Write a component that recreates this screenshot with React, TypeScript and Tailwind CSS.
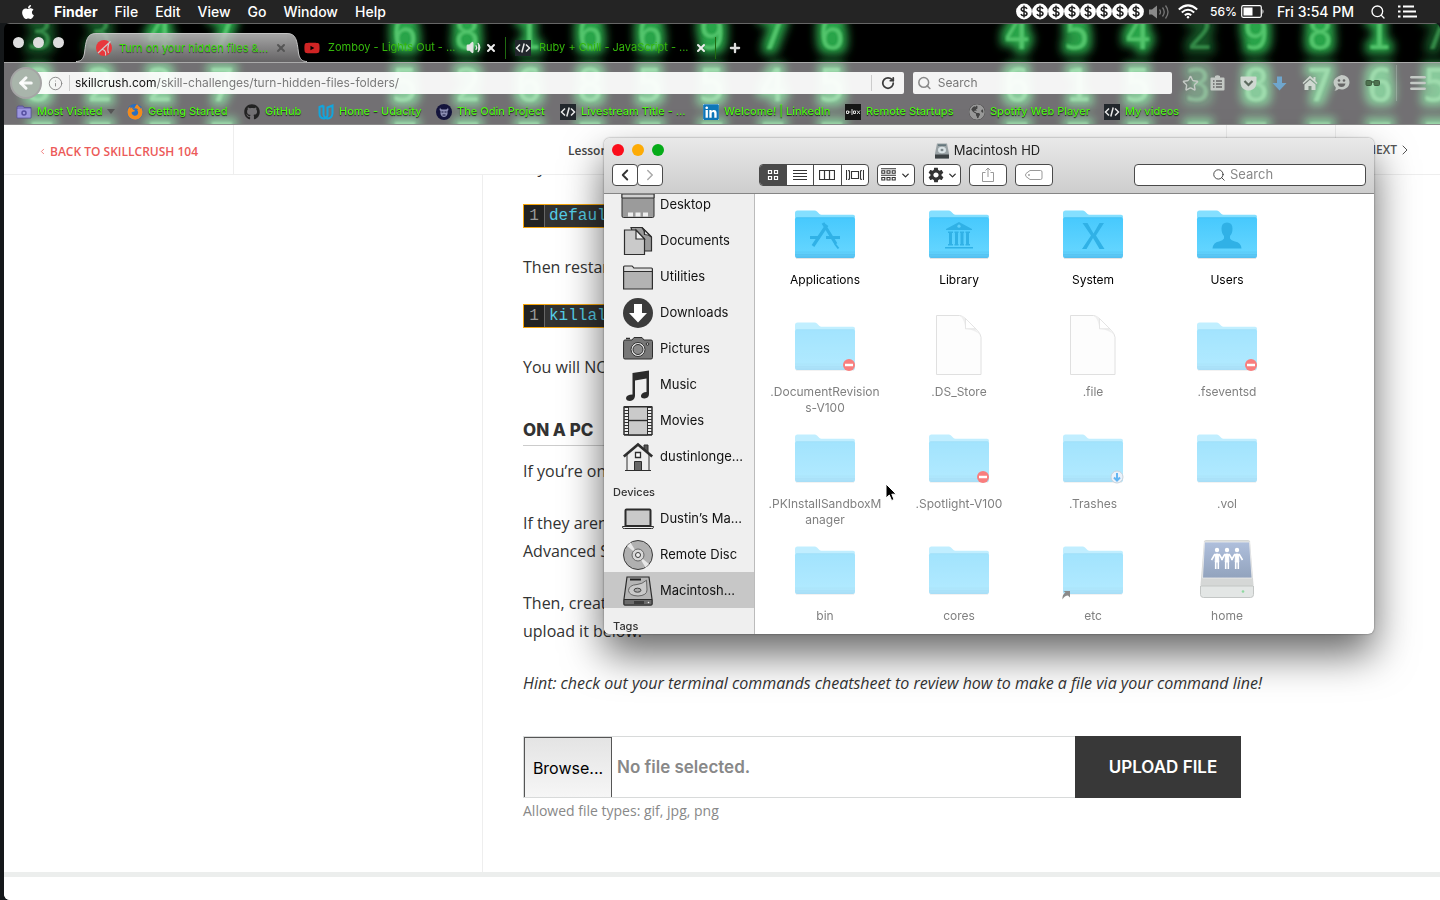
import React from "react";
import {
  FaApple,
  FaGithub,
  FaFirefoxBrowser,
  FaYoutube,
  FaLinkedin,
  FaGlobeAmericas,
} from "react-icons/fa";
import { IoMdSettings } from "react-icons/io";
import {
  Search,
  Star,
  Menu,
  ChevronLeft,
  ChevronRight,
  ChevronDown,
  X,
  Plus,
  ArrowLeft,
  RotateCw,
  Info,
  Volume2,
} from "lucide-react";

/* ---------- Menu bar ---------- */

const menus = ["File", "Edit", "View", "Go", "Window", "Help"];

function MenuBar() {
  return (
    <header className="flex h-[23px] items-center justify-between bg-[#242424] pr-[22px] pl-5 text-[14px] font-medium text-white">
      <nav className="flex items-center gap-[17px]" aria-label="Menu bar">
        <button type="button" aria-label="Apple menu" className="pr-px">
          <FaApple size={16} />
        </button>
        <button type="button" className="font-bold">
          Finder
        </button>
        {menus.map((m) => (
          <button type="button" key={m}>
            {m}
          </button>
        ))}
      </nav>
      <div className="flex items-center">
        <svg width="128" height="17" viewBox="0 0 128 17" className="mr-1">
          {[0, 1, 2, 3, 4, 5, 6, 7].map((i) => (
            <g key={i} transform={`translate(${i * 16} 0)`}>
              <circle cx="8" cy="8.5" r="7.9" fill="#fff" />
              <path
                d="M11 5.8C10.4 4.6 9.2 4.2 8 4.2 6.400 4.200 5.200 5 5.200 6.300 5.200 9.300 11 7.600 11 10.600 11 12 9.700 12.800 8 12.800 6.500 12.800 5.400 12.200 5 11M8 2.600V14.400"
                fill="none"
                stroke="#222"
                strokeWidth="1.500"
              />
            </g>
          ))}
        </svg>
        <svg width="22" height="16" viewBox="0 0 22 16" fill="none" stroke="#777" className="mr-2">
          <path d="M1 5.500h3l5-4v13l-5-4H1z" fill="#8a8a8a" stroke="none" />
          <path d="M11.500 5.500q2 2.500 0 5M14.500 3.500q3.500 4.500 0 9M17.500 1.500q5 6.500 0 13" strokeWidth="1.300" />
        </svg>
        <svg width="20" height="15" viewBox="0 0 20 15" fill="none" stroke="#fff" strokeWidth="2" className="mr-3">
          <path d="M.8 5.400q9.200-8 18.400 0M3.800 8.400q6.200-5.200 12.400 0M6.800 11.200q3.200-2.600 6.400 0" />
          <circle cx="10" cy="13.200" r="1.200" fill="#fff" stroke="none" />
        </svg>
        <span className="mr-1 text-[12px]">56%</span>
        <svg width="24" height="13" viewBox="0 0 24 13" className="mr-3">
          <rect x=".7" y=".7" width="19.600" height="11.600" rx="1.500" fill="none" stroke="#fff" strokeWidth="1.200" />
          <rect x="2.500" y="2.500" width="9" height="8" fill="#fff" />
          <path d="M21.500 4q2 2.500 0 5z" fill="#fff" />
        </svg>
        <span className="mr-4">Fri 3:54 PM</span>
        <button type="button" aria-label="Spotlight" className="mr-3">
          <Search size={16} />
        </button>
        <button type="button" aria-label="Notification Center">
          <svg width="20" height="13" viewBox="0 0 20 13" stroke="#fff" strokeWidth="2">
            <path d="M0 1.500h2.500M5 1.500h11M0 6.500h2.500M5 6.500h13M0 11.500h2.500M5 11.500h14" />
          </svg>
        </button>
      </div>
    </header>
  );
}

/* ---------- Browser theme artwork ---------- */

const digitRows: { y: number; dim: number[]; digits: [number, string][] }[] = [
  {
    y: 26,
    dim: [95, 1200, 1196, 1432, 36],
    digits: [
      [36, "3"], [95, "3"], [156, "4"], [219, "7"], [401, "6"], [463, "8"], [524, "1"], [586, "6"],
      [646, "6"], [708, "9"], [769, "7"], [828, "6"], [1013, "4"], [1073, "5"], [1134, "4"],
      [1196, "2"], [1252, "9"], [1316, "8"], [1374, "1"], [1432, "7"],
    ],
  },
  {
    y: 78,
    dim: [1194],
    digits: [
      [34, "8"], [96, "2"], [156, "2"], [218, "7"], [401, "5"], [464, "2"], [525, "6"], [586, "8"],
      [646, "5"], [708, "5"], [769, "4"], [828, "5"], [1013, "6"], [1074, "1"], [1134, "5"],
      [1194, "3"], [1252, "8"], [1316, "7"], [1376, "6"], [1432, "5"],
    ],
  },
];

const litEdges = [38, 96, 156, 218, 401, 464, 525, 586, 646, 708, 769, 828, 1013, 1074, 1134, 1194, 1252, 1316, 1376, 1432];

function MatrixArtwork() {
  return (
    <svg
      aria-hidden="true"
      className="absolute inset-0 h-full w-full"
      fontFamily="DejaVu Sans Mono, monospace"
      fontSize="44"
      textAnchor="middle"
    >
      <defs>
        <filter id="glow" x="-5%" y="-30%" width="110%" height="160%">
          <feMorphology in="SourceGraphic" operator="dilate" radius="5" result="fat" />
          <feGaussianBlur in="fat" stdDeviation="5" result="halo" />
          <feColorMatrix in="halo" type="matrix" values=".3 0 0 0 0  0 .75 0 0 0  0 0 .5 0 0  0 0 0 .95 0" result="tint" />
          <feGaussianBlur in="SourceGraphic" stdDeviation="1.200" result="core" />
          <feMerge>
            <feMergeNode in="tint" />
            <feMergeNode in="core" />
          </feMerge>
        </filter>
      </defs>
      <g filter="url(#glow)" fill="#52c56c">
        {digitRows.map((row) =>
          row.digits.map(([x, d]) => (
            <text key={`${row.y}-${x}`} x={x} y={row.y} opacity={row.dim.includes(x) ? 0.5 : 1}>
              {d}
            </text>
          ))
        )}
        {litEdges.map((x) => (
          <path key={x} d={`M${x - 10} 101h20`} stroke="#52c56c" strokeWidth="3" />
        ))}
      </g>
    </svg>
  );
}

/* ---------- Browser ---------- */

function CodeIcon() {
  return (
    <svg width="16" height="16" viewBox="0 0 16 16" className="shrink-0">
      <rect width="16" height="16" fill="#22272c" />
      <path d="M5 4.500 1.500 8 5 11.500M11 4.500 14.500 8 11 11.500M9.200 3.500 6.800 12.500" fill="none" stroke="#e8e8e8" strokeWidth="1.500" />
    </svg>
  );
}

function SkillcrushIcon() {
  return (
    <svg width="16" height="16" viewBox="0 0 16 16" className="shrink-0">
      <circle cx="8" cy="8" r="8" fill="#e8383c" />
      <path d="M2 13 14.500 1.500M6.500 9.500q4 1 3 6M13 3q-2 6-.5 10" stroke="#cfcfcf" strokeWidth="1.100" fill="none" />
    </svg>
  );
}

function TabEdge({ right = false }: { right?: boolean }) {
  return (
    <svg width="20" height="29" viewBox="0 0 20 29" className={right ? "shrink-0 -scale-x-100" : "shrink-0"} aria-hidden="true">
      <defs>
        <linearGradient id="tabfill" gradientUnits="userSpaceOnUse" x1="0" y1="0" x2="0" y2="29">
          <stop offset="0" stopColor="#c3c3c3" stopOpacity=".85" />
          <stop offset="1" stopColor="#777577" stopOpacity=".85" />
        </linearGradient>
      </defs>
      <path d="M0 28.500C5 28.500 7.500 26 8.500 20 10 7 11 .5 20 .5V29H0z" fill="url(#tabfill)" />
      <path d="M0 28.500C5 28.500 7.500 26 8.500 20 10 7 11 .5 20 .5" fill="none" stroke="#c4c4c4" />
    </svg>
  );
}

function Tabs() {
  return (
    <div className="relative flex h-[39px] items-end border-t border-[#666]">
      <div className="mb-[14px] ml-[9px] flex gap-[9px]" aria-label="Window controls">
        {["Close", "Minimize", "Zoom"].map((n) => (
          <button type="button" key={n} aria-label={n} className="size-[11px] rounded-full bg-[#dedede]" />
        ))}
      </div>
      <div className="ml-3 flex h-[29px] w-[226px] items-end">
        <TabEdge />
        <div className="relative z-10 flex h-[29px] flex-1 items-center border-t border-[#c4c4c4] bg-linear-to-b from-[#c3c3c3]/85 to-[#777577]/85">
          <SkillcrushIcon />
          <a href="#tab-1" className="ml-[7px] w-[154px] shrink-0 text-[11px] whitespace-nowrap text-[#3fe011] [text-shadow:0_1px_1px_#333]">
            Turn on your hidden files &amp;...
          </a>
          <button type="button" aria-label="Close tab" className="ml-0.5 shrink-0 text-[#555]">
            <X size={12} strokeWidth={4} />
          </button>
        </div>
        <TabEdge right />
      </div>
      <div className="flex h-[29px] items-center">
        <FaYoutube size={16} className="ml-0.5 text-[#cf2424]" />
        <a href="#tab-2" className="ml-2 w-[134px] text-[11px] whitespace-nowrap text-[#35b80c]">
          Zomboy - Lights Out - ...
        </a>
        <Volume2 size={15} fill="#e5e5e5" strokeWidth={2} className="ml-1 text-[#e5e5e5]" />
        <button type="button" aria-label="Close tab" className="ml-1 text-[#eee]">
          <X size={12} strokeWidth={4} />
        </button>
        <span className="mr-[9px] ml-2 h-[22px] w-px bg-[#1f6a10]" />
        <CodeIcon />
        <a href="#tab-3" className="ml-2 w-[154px] text-[11px] whitespace-nowrap text-[#35b80c]">
          Ruby + Chill - JavaScript - ...
        </a>
        <button type="button" aria-label="Close tab" className="ml-0.5 text-[#eee]">
          <X size={12} strokeWidth={4} />
        </button>
        <span className="mr-3 ml-2 h-[22px] w-px bg-[#1f6a10]" />
        <button type="button" aria-label="New tab" className="text-[#ddd]">
          <Plus size={14} strokeWidth={4} />
        </button>
      </div>
    </div>
  );
}

function NavBar() {
  return (
    <div className="flex h-10 items-center">
      <button
        type="button"
        aria-label="Back"
        className="relative z-10 ml-1.5 flex size-8 items-center justify-center rounded-full border-2 border-[#a5a5a5] bg-[#a9b5ab] text-white/90"
      >
        <ArrowLeft size={18} strokeWidth={4} />
      </button>
      <div className="-ml-2 flex h-[22px] flex-1 items-center rounded-r-xs bg-white/92 pl-[14px]">
        <Info size={15} strokeWidth={1.5} className="text-[#888]" />
        <span className="mr-[5px] ml-1.5 h-4 w-px bg-[#ccc]" />
        <p className="flex-1 text-[12px] text-[#7a7a7a]">
          <span className="text-[#111]">skillcrush.com</span>/skill-challenges/turn-hidden-files-folders/
        </p>
        <span className="h-4 w-px bg-[#ccc]" />
        <button type="button" aria-label="Reload" className="mx-[9px] text-[#3c3c3c]">
          <RotateCw size={14} strokeWidth={3} />
        </button>
      </div>
      <label className="ml-[9px] flex h-[22px] w-[259px] items-center rounded-xs bg-white/92 pl-1 text-[#8a8a8a]">
        <Search size={16} strokeWidth={2.5} />
        <input
          type="text"
          aria-label="Search the web"
          placeholder="Search"
          className="ml-1.5 w-full bg-transparent text-[12px] outline-none placeholder:text-[#777]"
        />
      </label>
      <div className="flex items-center gap-[15px] pr-3 pl-2.5 text-[#c4c9c5]">
        <Star size={17} className="-mr-1" />
        <svg width="15" height="16" viewBox="0 0 15 16">
          <path d="M1.500 2.500h3.500V1q2.500-1.500 5 0v1.500h3.500q1 0 1 1v11q0 1-1 1h-12q-1 0-1-1v-11q0-1 1-1z" fill="#c4c9c5" />
          <path d="M3 6h1.500M6 6h6M3 9h1.500M6 9h6M3 12h1.500M6 12h6" stroke="#666" strokeWidth="1.400" />
        </svg>
        <svg width="17" height="15" viewBox="0 0 17 15">
          <path d="M1.500.5h14q1 0 1 1V6q0 5-3.500 7.300-4.500 2.400-9 0Q.5 11 .5 6V1.500q0-1 1-1z" fill="#d0d8d1" />
          <path d="m4.500 5 4 4 4-4" fill="none" stroke="#5d6b5e" strokeWidth="2.200" />
        </svg>
        <svg width="15" height="15" viewBox="0 0 15 15">
          <path d="M5 .5h5V7h4.500l-7 7.500L.5 7H5z" fill="#6fa6cd" />
        </svg>
        <svg width="16" height="16" viewBox="0 0 16 16" fill="#d0d8d1">
          <path d="M8 .8 11.500 4V2h2v4L15.500 8l-1 1L8 3.200 1.500 9l-1-1z" />
          <path d="M8 4.800 13.500 9.500V15h-4v-4h-3v4h-4V9.500z" />
        </svg>
        <svg width="17" height="16" viewBox="0 0 17 16">
          <path d="M8.500 0C13 0 16.500 3 16.500 7.200S13 14.500 8.500 14.500q-1.500 0-2.800-.4Q4 15.800 1.500 15.800 3 14.500 2.800 12.500.5 10.500.5 7.200.5 3 8.500 0z" fill="#c4c9c5" />
          <circle cx="6" cy="5.500" r="1.300" fill="#666" />
          <circle cx="11" cy="5.500" r="1.300" fill="#666" />
          <path d="M4.500 8.500h8q-.8 3.500-4 3.500t-4-3.500z" fill="#666" />
        </svg>
        <svg width="16" height="8" viewBox="0 0 16 8">
          <rect x="1" y="1.500" width="5.500" height="5" rx="1" fill="#4e7350" stroke="#3f5c41" />
          <rect x="9" y="1.500" width="5.500" height="5" rx="1" fill="#4e7350" stroke="#3f5c41" />
          <path d="M6 3h3" stroke="#3f5c41" strokeWidth="1.500" />
        </svg>
        <span className="-mr-1 h-9 w-px bg-white/20" />
        <button type="button" aria-label="Open menu">
          <Menu size={20} strokeWidth={3} />
        </button>
      </div>
    </div>
  );
}

const bookmarks: { label: string; icon: React.ReactNode; width: string; arrow?: boolean }[] = [
  {
    label: "Most Visited",
    width: "w-[111px]",
    arrow: true,
    icon: (
      <svg width="16" height="16" viewBox="0 0 16 16" className="shrink-0">
        <path d="M1 3.500 2 2h5l1 1.500h7V14H1z" fill="#8079c4" stroke="#5a5496" />
        <path d="M1.500 5h13v8.500h-13z" fill="#9d97e0" />
        <circle cx="8" cy="9" r="2" fill="none" stroke="#564fa0" strokeWidth="1.500" />
      </svg>
    ),
  },
  {
    label: "Getting Started",
    width: "w-[117px]",
    icon: <FaFirefoxBrowser size={16} className="shrink-0 rounded-full bg-[#2a6fc0] text-[#f28a1c]" />,
  },
  { label: "GitHub", width: "w-[74px]", icon: <FaGithub size={16} className="shrink-0 text-[#222]" /> },
  {
    label: "Home - Udacity",
    width: "w-[118px]",
    icon: (
      <svg width="16" height="16" viewBox="0 0 16 16" fill="none" stroke="#12a5dd" strokeWidth="2" className="shrink-0">
        <path d="M5.500 1.500 1.500 3v6.500Q1.500 14 5.500 14.500q3 0 4-3V3.500l5-2V9.500q-.500 5-5 5-3-.5-4-3.500V1.500" />
      </svg>
    ),
  },
  {
    label: "The Odin Project",
    width: "w-[124px]",
    icon: (
      <svg width="16" height="16" viewBox="0 0 16 16" className="shrink-0">
        <circle cx="8" cy="8" r="8" fill="#14143c" />
        <path d="M4 3.500q.5 2 2 2h4q1.500 0 2-2Q13 6 11.500 7v3q-1 3-3.500 3t-3.500-3V7Q3 6 4 3.500z" fill="#8d8fb5" />
        <path d="M5.500 8h2M8.500 8h2M6.500 11h3" stroke="#14143c" strokeWidth="1.200" />
      </svg>
    ),
  },
  { label: "Livestream Title - ...", width: "w-[143px]", icon: <CodeIcon /> },
  {
    label: "Welcome! | LinkedIn",
    width: "w-[142px]",
    icon: (
      <span className="flex size-4 shrink-0 items-center justify-center bg-white">
        <FaLinkedin size={18} className="shrink-0 text-[#0f76b8]" />
      </span>
    ),
  },
  {
    label: "Remote Startups",
    width: "w-[124px]",
    icon: (
      <svg width="16" height="16" viewBox="0 0 16 16" className="shrink-0">
        <rect width="16" height="16" fill="#161616" />
        <path d="M1.500 7h2v2.500h-2zM4 8h1.500M7 5v6M8.500 7h2v2.500h-2zM12 6.500l3 3.500M15 6.500 12 10" fill="none" stroke="#ddd" />
      </svg>
    ),
  },
  {
    label: "Spotify Web Player",
    width: "w-[135px]",
    icon: <FaGlobeAmericas size={16} className="shrink-0 rounded-full bg-[#444] text-[#999]" />,
  },
  { label: "My videos", width: "w-[90px]", icon: <CodeIcon /> },
];

function Bookmarks() {
  return (
    <nav className="flex h-[21px] items-center pb-1 pl-3" aria-label="Bookmarks">
      {bookmarks.map((b) => (
        <a
          key={b.label}
          href={`#${b.label.replace(/\W+/g, "-").toLowerCase()}`}
          className={`${b.width} flex shrink-0 items-center gap-[5px] text-[11px] font-medium whitespace-nowrap text-[#4cf516] [text-shadow:0_1px_1px_#222]`}
        >
          {b.icon}
          {b.label}
          {b.arrow && (
            <svg width="8" height="5" viewBox="0 0 8 5" className="shrink-0">
              <path d="M0 0h8L4 5z" fill="#555" />
            </svg>
          )}
        </a>
      ))}
    </nav>
  );
}

function BrowserChrome() {
  return (
    <div className="relative overflow-hidden rounded-t-md bg-black">
      <MatrixArtwork />
      <Tabs />
      <div className="relative border-y border-t-[#aaa] border-b-[#8a8a8a] bg-[#fdf8ff]/45">
        <NavBar />
        <Bookmarks />
      </div>
    </div>
  );
}

/* ---------- Lesson page ---------- */

function CodeLine({ children }: { children: React.ReactNode }) {
  return (
    <pre className="mt-[23px] mb-[25px] flex h-6 items-stretch border border-[#f5a50c] bg-[#333] font-['Liberation_Mono',monospace] text-[16px] leading-[22px]">
      <span className="w-[21px] border-r border-[#666] bg-[#222] text-center text-[#999]">1</span>
      <code className="pl-1 text-[#55cde6]">{children}</code>
    </pre>
  );
}

function LessonPage() {
  return (
    <div className="flex flex-1 flex-col overflow-hidden rounded-bl-md bg-white font-['Open_Sans',sans-serif] text-[#333]">
      <nav className="flex h-[50px] items-center border-b border-[#eee] text-[12px] font-semibold" aria-label="Lesson navigation">
        <a
          href="#skillcrush-104"
          className="flex h-full w-[230px] items-center gap-[3px] border-r border-[#eee] pt-1 pl-[34px] text-[#ec5a58]"
        >
          <ChevronLeft size={9} />
          BACK TO SKILLCRUSH 104
        </a>
        <div className="h-full flex-1 border-r border-[#eee] pl-[334px] leading-[52px] text-[#444]">Lesson</div>
        <div className="h-full w-[109px] border-r border-[#eee]" />
        <a href="#next" className="flex w-[104px] items-center justify-end pr-[27px] text-[#555]">
          NEXT
          <ChevronRight size={16} strokeWidth={1.5} />
        </a>
      </nav>
      <div className="ml-[478px] flex-1 border-l border-[#eee] pr-10 pl-10 text-[16px] leading-7">
        <div className="w-full max-w-[718px]">
          <div className="h-1.5 overflow-hidden">
            <p className="-mt-[22px]">My</p>
          </div>
          <CodeLine>defaults</CodeLine>
          <p>Then restart</p>
          <CodeLine>killall</CodeLine>
          <p>You will NOT</p>
          <h2 className="mt-[34px] mb-[11px] border-b border-[#ccc] font-[Inter,sans-serif] text-[17px] leading-[30px] font-extrabold">
            ON A PC
          </h2>
          <p className="mb-6">If you’re on</p>
          <p className="mb-6">
            If they aren’t
            <br />
            Advanced Settings
          </p>
          <p className="mb-6">
            Then, create
            <br />
            upload it below.
          </p>
          <p className="whitespace-nowrap italic">
            Hint: check out your terminal commands cheatsheet to review how to make a file via your command line!
          </p>
          <form className="mt-[39px]" onSubmit={(e) => e.preventDefault()}>
            <div className="flex h-[62px] font-[Inter,sans-serif]">
              <div className="flex flex-1 items-center border border-r-0 border-[#d8dada]">
                <button
                  type="button"
                  className="h-full w-[88px] border border-b-0 border-[#555] bg-linear-to-b from-[#e4e4e4] to-[#f6f6f6] text-[16px] text-black"
                >
                  Browse...
                </button>
                <output className="pl-[5px] text-[17px] font-semibold text-[#888]">No file selected.</output>
              </div>
              <button type="submit" className="w-[166px] bg-[#383838] pl-2.5 text-[17px] font-semibold text-white">
                UPLOAD FILE
              </button>
            </div>
            <p className="text-[14px] leading-[26px] text-[#888]">Allowed file types: gif, jpg, png</p>
          </form>
        </div>
      </div>
      <footer className="h-7 border-t-[5px] border-[#eceeed] bg-white" />
    </div>
  );
}

/* ---------- Finder ---------- */

const tool = "flex h-[22px] items-center justify-center rounded-[4px] border border-[#4a4a4a] bg-white text-[#333]";

function DriveIcon({ size }: { size: number }) {
  return (
    <svg width={size} height={size} viewBox="0 0 30 30" className="shrink-0">
      <path d="M4 1h22l3 22v5q0 1-1 1H2q-1 0-1-1v-5z" fill="#b5b5b5" stroke="#2b2b2b" strokeWidth="1.200" />
      <path d="M1 23.500h28v4.500q0 1-1 1H2q-1 0-1-1z" fill="#6b6b6b" stroke="#2b2b2b" />
      <path d="M7 3.500h11" stroke="#222" strokeWidth="2" />
      <path d="M14 8.500q5-.3 9.500-4.300l.5 9.800q0 5.500-9 6-9-.3-9.500-5.500.5-5.500 8.500-6z" fill="#c9c9c9" stroke="#666" />
      <ellipse cx="14.500" cy="14.200" rx="3.500" ry="2" fill="#aaa" stroke="#444" />
      <path d="M12 25v3M14 25v3M16 25v3M18 25v3M20 25v3" stroke="#111" />
      <circle cx="25.500" cy="26.500" r=".8" fill="#eee" />
    </svg>
  );
}

function FinderHeader() {
  return (
    <header className="h-14 border-b border-[#858585] bg-linear-to-b from-[#e9e9e9] to-[#cdcdcd] px-2">
      <div className="relative flex h-6 items-center justify-center pt-0.5">
        <div className="absolute top-1.5 left-0 flex gap-2">
          <button type="button" aria-label="Close" className="size-3 rounded-full bg-[#fb0d1b]" />
          <button type="button" aria-label="Minimize" className="size-3 rounded-full bg-[#fdab05]" />
          <button type="button" aria-label="Zoom" className="size-3 rounded-full bg-[#05ab18]" />
        </div>
        <h1 className="flex items-center gap-1 pr-1 text-[13px] text-[#222]">
          <svg width="16" height="16" viewBox="0 0 16 16">
            <path d="M3 .5h10l2 10V15q0 .5-.5.5h-13Q1 15.500 1 15v-4.500z" fill="#9aa3a6" />
            <path d="M1 11.500h14V15q0 .5-.5.5h-13Q1 15.500 1 15z" fill="#3c4244" />
            <ellipse cx="8" cy="7" rx="4" ry="3.200" fill="#d9e2e5" />
            <ellipse cx="8" cy="7" rx="1.500" ry="1.200" fill="#7c878b" />
            <path d="M4 2.200h8" stroke="#53696f" strokeWidth="1.200" />
          </svg>
          Macintosh HD
        </h1>
      </div>
      <div className="flex items-center pt-0.5">
        <div className="flex">
          <button type="button" aria-label="Back" className={`${tool} w-[26px]`}>
            <ChevronLeft size={18} strokeWidth={2.5} className="shrink-0" />
          </button>
          <button type="button" aria-label="Forward" className={`${tool} -ml-px w-[26px]`}>
            <ChevronRight size={18} className="shrink-0 text-[#aaa]" />
          </button>
        </div>
        <div className="ml-24 flex h-[22px] w-[110px] overflow-hidden rounded-[4px] border border-[#4a4a4a] bg-white">
          <button type="button" aria-label="Icon view" className="flex flex-1 items-center justify-center bg-[#4a4a4a]">
            <svg width="12" height="12" viewBox="0 0 12 12" fill="none" stroke="#fff" strokeWidth="1.200">
              <path d="M1.500 1.500h3v3h-3zM7.500 1.500h3v3h-3zM1.500 7.500h3v3h-3zM7.500 7.500h3v3h-3z" />
            </svg>
          </button>
          <button type="button" aria-label="List view" className="flex flex-1 items-center justify-center border-r border-[#4a4a4a]">
            <svg width="14" height="12" viewBox="0 0 14 12" stroke="#333">
              <path d="M0 1.500h14M0 4.500h14M0 7.500h14M0 10.500h14" />
            </svg>
          </button>
          <button type="button" aria-label="Column view" className="flex flex-1 items-center justify-center border-r border-[#4a4a4a]">
            <svg width="16" height="12" viewBox="0 0 16 12" fill="none" stroke="#333" strokeWidth="1.200">
              <path d="M.5 1.500h15v9H.5zM5.500 1.500v9M10.500 1.500v9" />
            </svg>
          </button>
          <button type="button" aria-label="Cover Flow" className="flex flex-1 items-center justify-center">
            <svg width="18" height="12" viewBox="0 0 18 12" fill="none" stroke="#333" strokeWidth="1.100">
              <path d="M5.500 2.500h7v7h-7zM.5 1v10M2 1.500l1.500.5v8L2 10.500M17.500 1v10M16 1.500l-1.500.5v8l1.500.5" />
            </svg>
          </button>
        </div>
        <button type="button" aria-label="Arrange" className={`${tool} ml-2 w-[38px] gap-1`}>
          <svg width="15" height="14" viewBox="0 0 15 14" fill="none" stroke="#333" strokeWidth="1.100">
            <path d="M0 .7h15M0 7.200h15M.8 2.800h3v2.500h-3zM6 2.800h3v2.500H6zM11.200 2.800h3v2.500h-3zM.8 9.500h3V12h-3zM6 9.500h3V12H6zM11.200 9.500h3V12h-3z" />
          </svg>
          <ChevronDown size={11} strokeWidth={3} />
        </button>
        <button type="button" aria-label="Action" className={`${tool} ml-2 w-[38px] gap-0.5`}>
          <IoMdSettings size={18} />
          <ChevronDown size={11} strokeWidth={3} />
        </button>
        <button type="button" aria-label="Share" className={`${tool} ml-2 w-[38px]`}>
          <svg width="12" height="16" viewBox="0 0 12 16" fill="none" stroke="#999">
            <path d="M3.500 5.500h-3v9h11v-9h-3M6 10V1M3.500 3.500 6 1l2.500 2.500" />
          </svg>
        </button>
        <button type="button" aria-label="Edit tags" className={`${tool} ml-2 w-[38px]`}>
          <svg width="18" height="10" viewBox="0 0 18 10" fill="none" stroke="#999">
            <path d="M5 .5h10.500q1.500 0 1.500 1.500v6q0 1.500-1.500 1.500H5L1 6.500q-1-1.500 0-3z" />
            <circle cx="4" cy="5" r=".6" />
          </svg>
        </button>
        <label className={`${tool} ml-auto w-[232px] gap-1 pr-2`}>
          <Search size={14} strokeWidth={1.5} className="shrink-0" />
          <input
            type="text"
            aria-label="Search files"
            placeholder="Search"
            className="w-[50px] bg-transparent text-[13px] outline-none placeholder:text-[#888]"
          />
        </label>
      </div>
    </header>
  );
}

const sideIcons: Record<string, React.ReactNode> = {
  Desktop: (
    <g stroke="#2e2e2e">
      <path d="M-1 4h32v22q0 1.500-1.500 1.500h-29q-1.500 0-1.500-1.500z" fill="#9b9b9b" />
      <path d="M-1 4h32v4H-1z" fill="#d0d0d0" />
      <path d="M5 22.500h5v4H5zM12.500 22.500h5v4h-5zM20 22.500h5v4h-5z" fill="#eee" stroke="none" />
    </g>
  ),
  Documents: (
    <g stroke="#2e2e2e" strokeWidth="1.200">
      <path d="M8 1.500h11l9.500 9.500v14H15z" fill="#9b9b9b" />
      <path d="M19 1.500q3 3 2.500 7 4 0 7 2.500z" fill="#eee" />
      <path d="M1.500 4H13l8.500 9v15.500h-20z" fill="#cacaca" />
      <path d="M13 4v9h8.500z" fill="#eee" />
    </g>
  ),
  Utilities: (
    <g stroke="#2e2e2e" strokeWidth="1.200">
      <path d="M.6 5q0-1 1-1h7q1 0 1.500 1l.7 1h17.600q1 0 1 1v19.500H.6z" fill="#ddd" />
      <path d="M.6 9.500h28.800v17.500H.6z" fill="#b3b3b3" />
    </g>
  ),
  Downloads: (
    <g>
      <circle cx="15" cy="15" r="15" fill="#3c3c3c" />
      <path d="M11 6h8v9h5l-9 9.500L6 15h5z" fill="#fff" />
    </g>
  ),
  Pictures: (
    <g stroke="#2e2e2e">
      <path d="M.6 7.500q0-1.500 1.500-1.500H9l2-2.500h8L21 6h7q1.500 0 1.500 1.500v16q0 1.500-1.500 1.500h-26q-1.500 0-1.500-1.500z" fill="#777" />
      <circle cx="15" cy="15.500" r="7" fill="#eee" />
      <circle cx="15" cy="15.500" r="5" fill="#8a8a8a" />
      <circle cx="24.500" cy="10" r="1.300" fill="#ccc" />
      <path d="M3 4.500h4" strokeWidth="1.500" />
    </g>
  ),
  Music: (
    <path d="M9.500 3 26 .5v23.500q0 4-4.500 4.500-4 0-3.500-3 1-3.500 5.500-3.500V8.500L12 10.500v15.500q-.500 4.500-5 5-4 0-4-3 .5-3.500 6.500-3.500z" fill="#2b2b2b" />
  ),
  Movies: (
    <g stroke="#2e2e2e">
      <path d="M1 .5h28v28.500H1z" fill="#eee" />
      <path d="M5.500 1h19v28h-19z" fill="#cacaca" />
      <path d="M5.500 14.500h19" strokeWidth="1.400" />
      <path d="M3.200 1v28M26.800 1v28" strokeWidth="4" strokeDasharray="1 2" />
      <path d="M1 .5h28v28.500H1z" fill="none" />
    </g>
  ),
  "dustinlonge...": (
    <g stroke="#2e2e2e">
      <path d="M21 3h4v8h-4z" fill="#555" />
      <path d="M4 12 15 3l11 9v16.500H4z" fill="#eee" />
      <path d="M.8 14.500 15 2.500l14.200 12" fill="none" strokeWidth="2.600" />
      <path d="M12.500 10.500h5v5h-5z" fill="#fff" strokeWidth="1.300" />
      <path d="M11.500 19.500h7v9h-7z" fill="#666" />
      <path d="M2 28.500h26" />
    </g>
  ),
  "Dustin’s Ma...": (
    <g stroke="#2b2b2b">
      <path d="M2.500 6.500q0-1 1-1h23q1 0 1 1V22h-25z" fill="#c9c9c9" strokeWidth="2" />
      <path d="M-.5 22.500h31v1q0 1-2 1h-27q-2 0-2-1z" fill="#eee" />
    </g>
  ),
  "Remote Disc": (
    <g stroke="#3a3a3a">
      <circle cx="15" cy="15" r="14.500" fill="#b0b0b0" />
      <path d="M15 15 4 6l3.500-3.500zM15 15l11 9-3.500 3.500z" fill="#e8e8e8" stroke="none" />
      <circle cx="15" cy="15" r="6" fill="#d8d8d8" stroke="#666" />
      <circle cx="15" cy="15" r="2.500" fill="#eee" />
    </g>
  ),
};

const favorites = ["Desktop", "Documents", "Utilities", "Downloads", "Pictures", "Music", "Movies", "dustinlonge..."];
const devices = ["Dustin’s Ma...", "Remote Disc", "Macintosh..."];

function SideItem({ name, active = false }: { name: string; active?: boolean }) {
  return (
    <li>
      <a
        href={`#${name.replace(/\W+/g, "").toLowerCase()}`}
        className={`flex h-9 items-center gap-[7px] pt-0.5 pl-[19px] text-[13px] whitespace-nowrap text-[#111] ${active ? "bg-[#c7c7c7]" : ""}`}
      >
        {sideIcons[name] ? (
          <svg width="30" height="30" viewBox="0 0 30 30" className="shrink-0 overflow-visible">
            {sideIcons[name]}
          </svg>
        ) : (
          <DriveIcon size={30} />
        )}
        {name}
      </a>
    </li>
  );
}

type Kind = "folder" | "file" | "home";
type Badge = "deny" | "drop" | "alias";
const entries: { name: string; kind?: Kind; hidden?: boolean; badge?: Badge; glyph?: "apps" | "library" | "system" | "users" }[] = [
  { name: "Applications", glyph: "apps" },
  { name: "Library", glyph: "library" },
  { name: "System", glyph: "system" },
  { name: "Users", glyph: "users" },
  { name: ".DocumentRevisions-V100", hidden: true, badge: "deny" },
  { name: ".DS_Store", hidden: true, kind: "file" },
  { name: ".file", hidden: true, kind: "file" },
  { name: ".fseventsd", hidden: true, badge: "deny" },
  { name: ".PKInstallSandboxManager", hidden: true },
  { name: ".Spotlight-V100", hidden: true, badge: "deny" },
  { name: ".Trashes", hidden: true, badge: "drop" },
  { name: ".vol", hidden: true },
  { name: "bin", hidden: true },
  { name: "cores", hidden: true },
  { name: "etc", hidden: true, badge: "alias" },
  { name: "home", hidden: true, kind: "home" },
];

function EntryArt({ kind = "folder", hidden, badge, glyph }: { kind?: Kind; hidden?: boolean; badge?: Badge; glyph?: string }) {
  return (
    <svg width="64" height="64" viewBox="0 0 64 64" className="overflow-visible">
      <defs>
        <linearGradient id="folder" x1="0" y1="0" x2="0" y2="1">
          <stop offset="0" stopColor="#47c9fd" />
          <stop offset=".85" stopColor="#63d5ff" />
          <stop offset="1" stopColor="#53bdee" />
        </linearGradient>
        <linearGradient id="screen" x1="0" y1="0" x2="0" y2="1">
          <stop offset="0" stopColor="#afbfdc" />
          <stop offset="1" stopColor="#92a3bd" />
        </linearGradient>
      </defs>
      {kind === "folder" && (
        <g opacity={hidden ? 0.5 : 1}>
          <path d="M3 56h58" stroke="#888" strokeOpacity=".3" strokeWidth="1.500" />
          <path d="M2 11q0-2.500 2.500-2.500h17q1.500 0 2.500 1l2.500 2.500q.8.800 2 .8H60q2 0 2 2V20H2z" fill="#84dfff" />
          <path d="M2 17.500q0-2 2-2h56q2 0 2 2V54q0 2-2 2H4q-2 0-2-2z" fill="url(#folder)" />
          <path d="M2 50h60M2 52.500h60" stroke="#4dbbe8" strokeOpacity=".35" />
          <path d="M3 15.700h58" stroke="#3dbbf0" strokeOpacity=".5" />
        </g>
      )}
      {glyph === "apps" && (
        <g stroke="#30b1e6" fill="none" strokeWidth="3.200">
          <path d="M30 21 43 42M34 23 20 44M17 35.500h10M33 35.500h14" />
          <path d="m42 42 3.500 4.500" strokeWidth="2" />
        </g>
      )}
      {glyph === "library" && (
        <svg x="18" y="19" width="28" height="28" viewBox="0 0 28 28">
          <path d="M14 1 27 8v1H1V8zM3 10.500h5v1.500H7v11h1v1.500H3V23h1V12H3zM9.500 10.500h4V12H13v11h.5v1.500h-4V23h.5V12h-.5zM15 10.500h4V12h-.5v11h.5v1.500h-4V23h.5V12H15zM20.500 10.500h4.500V12h-1v11h1v1.500h-4.500V23h.5V12h-.5zM0 26h28v1.500H0z" fill="#30b1e6" />
          <circle cx="14" cy="5.200" r="1.600" fill="#5fd0fb" />
        </svg>
      )}
      {glyph === "system" && (
        <path d="M21.500 21h5l6 10.500L38.500 21h4.500l-8 12.500 8.500 13.500h-5l-6.500-11-6.500 11H21l9-13.500z" fill="#30b1e6" />
      )}
      {glyph === "users" && (
        <path
          d="M32 20.500q5.500 0 5.500 6 0 5-2.500 7.500v2.500q1 2 5 3 6 1 6.500 7h-29q.5-6 6.500-7 4-1 5-3V34q-2.500-2.500-2.500-7.500 0-6 5.500-6z"
          fill="#30b1e6"
        />
      )}
      {kind === "file" && (
        <g>
          <path d="M9.500 1.500h23q3 .2 6 3.200l12 12q3 3 3.500 6.500v37.300H9.500z" fill="#fdfdfd" stroke="#e0e0e0" />
          <path d="M33 1.800q4 3 5.500 13 9.500 1 15 6.500L38 4q-2.500-2.200-5-2.200z" fill="#efefef" />
          <path d="M38.500 4.500v10.300h10.300z" fill="#fff" stroke="#ddd" strokeWidth=".7" />
        </g>
      )}
      {kind === "home" && (
        <g transform="translate(0 1.500)">
          <path d="M9 2q.3-1.500 2-1.500h42q1.700 0 2 1.500l3.500 43q0 2-2 2h-49q-2 0-2-2z" fill="#d5d7d6" />
          <path d="M9.500 2.500h45l2.500 36H7.500z" fill="url(#screen)" stroke="#eee" strokeWidth=".8" />
          <path d="M5.500 46.500h53v8.500q0 3-3 3h-47q-3 0-3-3z" fill="#e3e6e5" stroke="#c3c6c5" />
          <circle cx="48" cy="52" r="1.300" fill="#8ed9a0" />
          {[22, 32, 42].map((cx) => (
            <g key={cx} fill="#fff" stroke="#fff">
              <circle cx={cx} cy="10.500" r="2.200" stroke="none" />
              <path d={`M${cx - 1.500} 14.500h3l.3 8h-3.600z`} />
              <path d={`M${cx - 2} 14.500l-3.500 6M${cx + 2} 14.500l3.500 6M${cx - 1.300} 22v7.500M${cx + 1.300} 22v7.500`} strokeWidth="1.600" />
            </g>
          ))}
        </g>
      )}
      {badge === "deny" && (
        <g>
          <circle cx="56" cy="51" r="6" fill="#f97e7e" />
          <path d="M52 51h8" stroke="#fff" strokeWidth="2.500" />
        </g>
      )}
      {badge === "drop" && (
        <g>
          <circle cx="56" cy="51" r="6" fill="#eaf2fb" stroke="#c9d3dc" />
          <path d="M56 47v7.500M53 51.500l3 3 3-3" stroke="#64b6f2" strokeWidth="2" fill="none" />
        </g>
      )}
      {badge === "alias" && (
        <path d="M1.500 61.500q-.5-5 3-7l-2-1.500H9v6.500L7 57.500q-3.500 0-5.500 4z" fill="#8a8a8a" />
      )}
    </svg>
  );
}

function FinderWindow() {
  return (
    <section
      aria-label="Finder"
      className="absolute top-[138px] left-[604px] flex h-[496px] w-[770px] flex-col overflow-hidden rounded-md bg-white shadow-[0_20px_40px_rgba(0,0,0,0.6),0_0_2px_rgba(0,0,0,0.5)]"
    >
      <FinderHeader />
      <div className="flex min-h-0 flex-1">
        <aside className="w-[151px] shrink-0 overflow-hidden border-r border-[#bbb] bg-[#efefef]">
          <ul className="-mt-2">
            {favorites.map((n) => (
              <SideItem key={n} name={n} />
            ))}
          </ul>
          <h2 className="pt-2.5 pl-[9px] text-[11px] leading-4 font-medium text-[#333]">Devices</h2>
          <ul>
            {devices.map((n) => (
              <SideItem key={n} name={n} active={n === "Macintosh..."} />
            ))}
          </ul>
          <h2 className="pt-2.5 pl-[9px] text-[11px] leading-4 font-medium text-[#333]">Tags</h2>
        </aside>
        <ul className="grid flex-1 auto-rows-[112px] grid-cols-[repeat(auto-fill,134px)] pt-2 pl-[3px]">
          {entries.map((e) => (
            <li key={e.name} className="flex flex-col items-center">
              <EntryArt kind={e.kind} hidden={e.hidden} badge={e.badge} glyph={e.glyph} />
              <span
                className={`mt-1.5 w-[114px] text-center text-[12px] leading-4 break-all ${e.hidden ? "text-[#808080]" : "text-black"}`}
              >
                {e.name}
              </span>
            </li>
          ))}
        </ul>
      </div>
    </section>
  );
}

export default function App() {
  return (
    <div className="relative flex min-h-screen flex-col overflow-hidden bg-[#15181a] font-[Inter,sans-serif]">
      <MenuBar />
      <main className="ml-1 flex flex-1 flex-col">
        <BrowserChrome />
        <LessonPage />
      </main>
      <FinderWindow />
      <svg width="13" height="19" viewBox="0 0 13 19" className="absolute top-[483px] left-[885px]" aria-hidden="true">
        <path d="M1 1v14l3.300-3 2.300 5.500 2.400-1L6.800 11.200h4.400z" fill="#000" stroke="#fff" />
      </svg>
    </div>
  );
}
